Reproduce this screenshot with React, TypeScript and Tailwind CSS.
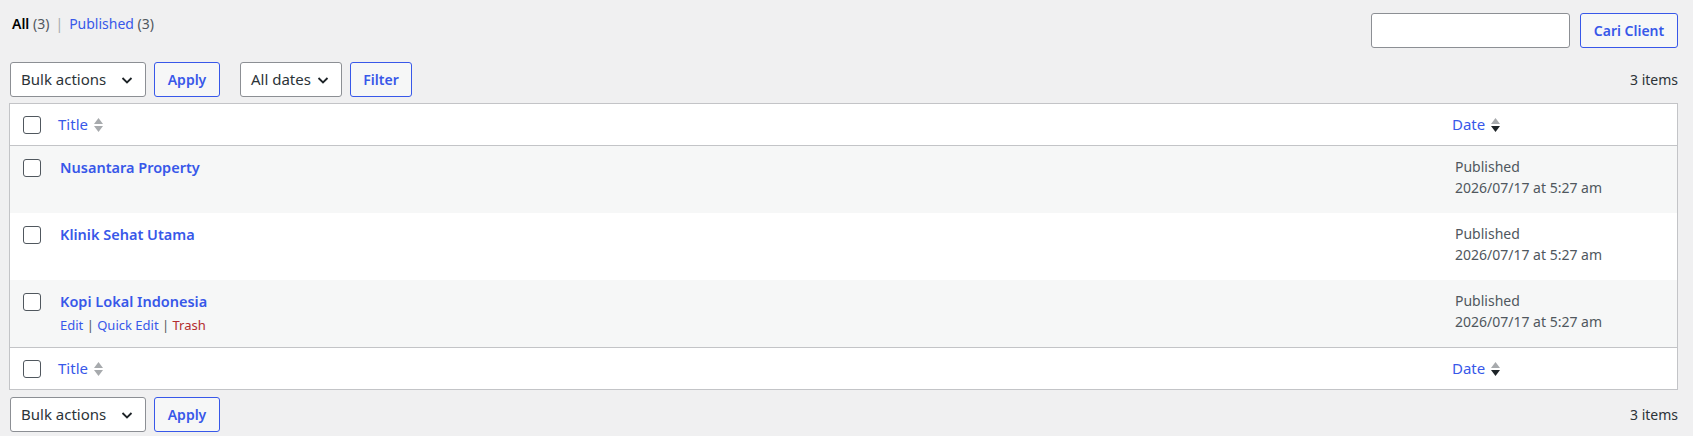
import React from "react";

const font = { fontFamily: '"Noto Sans", "Open Sans", sans-serif' };

function SortIcon({ active }: { active?: boolean }) {
  return (
    <svg width="11" height="18" viewBox="0 0 11 18" className="ml-[5px]">
      <path d="M5.5 2 L10 8 L1 8 Z" fill="#a7aaad" />
      <path d="M5.5 16 L10 10 L1 10 Z" fill={active ? "#1d2327" : "#a7aaad"} />
    </svg>
  );
}

function Check() {
  return <span className="block w-[18px] h-[18px] rounded-[3px] border border-[#50575e] bg-white" />;
}

function Chevron() {
  return (
    <svg width="14" height="14" viewBox="0 0 14 14">
      <path d="M2.5 5 L7 9.5 L11.5 5" fill="none" stroke="#1d2327" strokeWidth="1.8" />
    </svg>
  );
}

function Select({ label, w }: { label: string; w: string }) {
  return (
    <div className={`flex items-center justify-between h-[35px] ${w} bg-white border border-[#8c8f94] rounded-[3px] pl-[10px] pr-[11px] text-[15px] text-[#2c3338]`}>
      <span>{label}</span>
      <Chevron />
    </div>
  );
}

function Btn({ label, w }: { label: string; w: string }) {
  return (
    <div className={`flex items-center justify-center h-[35px] ${w} bg-[#f6f7f7] border border-[#3858e9] rounded-[3px] text-[14px] font-semibold text-[#3858e9]`}>
      {label}
    </div>
  );
}

function HeadRow({ top }: { top?: boolean }) {
  return (
    <div className={`flex h-[42px] items-center bg-white ${top ? "border-b" : "border-t"} border-[#c3c4c7]`}>
      <div className="w-[48px] pl-[13px]">
        <Check />
      </div>
      <div className="flex-1 flex items-center text-[15px] text-[#3858e9]">
        Title
        <SortIcon />
      </div>
      <div className="w-[232px] pl-[7px] flex items-center text-[15px] text-[#3858e9]">
        Date
        <SortIcon active />
      </div>
    </div>
  );
}

const rows = [
  { title: "Nusantara Property", alt: true },
  { title: "Klinik Sehat Utama", alt: false },
  { title: "Kopi Lokal Indonesia", alt: true, actions: true },
];

export default function App() {
  return (
    <div className="w-full h-[436px] bg-[#f0f0f1] pl-[9px] pr-[15px] text-[#1d2327]" style={font}>
      <div className="flex justify-between items-start pt-[13px]">
        <div className="pl-[3px] pt-[1px] text-[14px] leading-[20px]">
          <span className="font-semibold text-black">All</span>{" "}
          <span className="text-[#50575e]">(3)</span>
          <span className="text-[#a7aaad] mx-[6px]">|</span>
          <span className="text-[#3858e9]">Published</span>{" "}
          <span className="text-[#50575e]">(3)</span>
        </div>
        <div className="flex gap-[10px]">
          <div className="w-[199px] h-[35px] bg-white border border-[#8c8f94] rounded-[3px]" />
          <Btn label="Cari Client" w="w-[98px]" />
        </div>
      </div>
      <div className="flex items-center mt-[14px] pl-[1px]">
        <Select label="Bulk actions" w="w-[136px]" />
        <div className="ml-[8px]">
          <Btn label="Apply" w="w-[66px]" />
        </div>
        <div className="ml-[20px]">
          <Select label="All dates" w="w-[102px]" />
        </div>
        <div className="ml-[8px]">
          <Btn label="Filter" w="w-[62px]" />
        </div>
        <div className="ml-auto text-[14px] text-[#2c3338]">3 items</div>
      </div>
      <div className="mt-[6px] border border-[#c3c4c7] bg-white">
        <HeadRow top />
        {rows.map((r) => (
          <div key={r.title} className={`flex h-[67px] ${r.alt ? "bg-[#f6f7f7]" : "bg-white"}`}>
            <div className="w-[48px] pl-[13px] pt-[13px]">
              <Check />
            </div>
            <div className="flex-1 pl-[2px] pt-[10px]">
              <div className="text-[14.5px] leading-[22px] font-semibold text-[#3858e9]">{r.title}</div>
              {r.actions && (
                <div className="mt-[3px] text-[13px] leading-[20px] text-[#50575e]">
                  <span className="text-[#3858e9]">Edit</span> |{" "}
                  <span className="text-[#3858e9]">Quick Edit</span> |{" "}
                  <span className="text-[#b32d2e]">Trash</span>
                </div>
              )}
            </div>
            <div className="w-[232px] pl-[10px] pt-[10px] text-[14px] leading-[21px] text-[#50575e]">
              <div>Published</div>
              <div>2026/07/17 at 5:27 am</div>
            </div>
          </div>
        ))}
        <HeadRow />
      </div>
      <div className="flex items-center mt-[7px] pl-[1px]">
        <Select label="Bulk actions" w="w-[136px]" />
        <div className="ml-[8px]">
          <Btn label="Apply" w="w-[66px]" />
        </div>
        <div className="ml-auto text-[14px] text-[#2c3338]">3 items</div>
      </div>
    </div>
  );
}
